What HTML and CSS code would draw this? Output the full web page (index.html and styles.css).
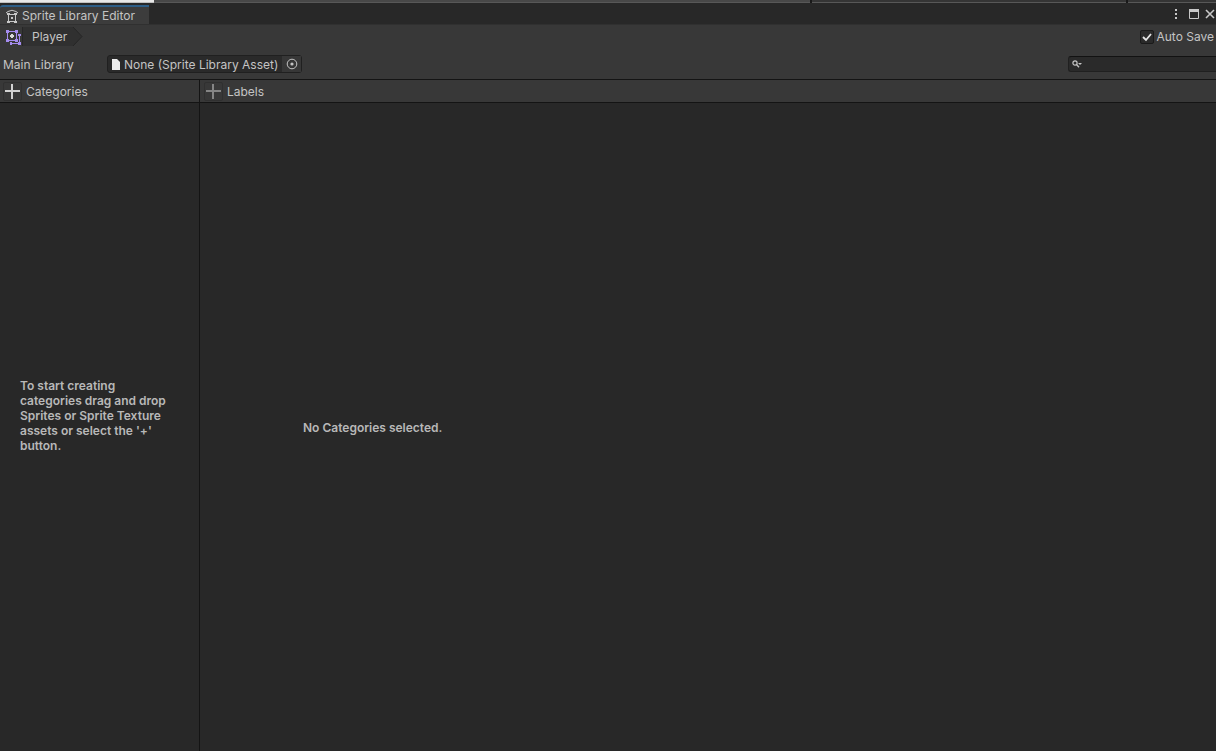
FILE: index.html
```html
<!DOCTYPE html>
<html lang="en">
<head>
    <meta charset="UTF-8">
    <meta name="viewport" content="width=device-width, initial-scale=1.0">
    <title>Sprite Library Editor</title>
    <link rel="stylesheet" href="styles.css">
</head>
<body>
    <div class="backdrop">
        <div class="backdrop-light"></div>
        <div class="backdrop-main"></div>
        <div class="backdrop-side"></div>
        <div class="backdrop-end"></div>
    </div>

    <header class="tab-bar">
        <div class="tab">
            <svg class="tab-icon" width="14" height="14" viewBox="0 0 14 14" fill="none" stroke="#c8c8c8">
                <path d="M1 4L3 2.5Q7 0 11 2.5L13 4"/>
                <path d="M3.5 5.5h7v7h-7z"/>
                <path d="M2 4h3v2H2zM9 4h3v2H9zM2 12h3v2H2zM9 12h3v2H9zM6 8h2v2H6z" fill="#c8c8c8" stroke="none"/>
            </svg>
            <h1 class="tab-title">Sprite Library Editor</h1>
        </div>
        <div class="window-buttons">
            <button class="window-btn" aria-label="Menu">
                <svg width="4" height="12" viewBox="0 0 4 12" fill="#c8c8c8"><path d="M1 1h2v2H1zM1 5h2v2H1zM1 9h2v2H1z"/></svg>
            </button>
            <button class="window-btn" aria-label="Maximize">
                <svg width="10" height="10" viewBox="0 0 10 10" fill="none" stroke="#c8c8c8"><path d="M.5 1v8.5h9V1"/><path d="M0 1.5h10" stroke-width="3"/></svg>
            </button>
            <button class="window-btn" aria-label="Close">
                <svg width="10" height="10" viewBox="0 0 10 10" fill="none" stroke="#c8c8c8" stroke-width="1.6"><path d="M1 1l8 8M9 1L1 9"/></svg>
            </button>
        </div>
    </header>

    <div class="toolbar">
        <nav class="breadcrumbs">
            <svg width="16" height="16" viewBox="0 0 16 16" fill="none" stroke="#a58cf0">
                <path d="M2.5 2.5h9v9h-9z"/>
                <path d="M14.5 6v8.5H6"/>
                <path d="M1 1h3v3H1zM10 1h3v3h-3zM1 10h3v3H1zM10 10h3v3h-3zM13 5h3v2h-3zM13 13h3v3h-3zM5 13h2v3H5z" fill="#a58cf0" stroke="none"/>
                <path d="M6 5h2v1h1v2H8v1H6V8H5V6h1z" fill="#d8d8d8" stroke="none"/>
            </svg>
            <a class="crumb" href="#">
                <span class="crumb-text">Player</span>
                <svg class="crumb-arrow" width="14" height="19" viewBox="0 0 14 19"><path d="M0 0h4l9 9.5L4 19H0z" fill="#303030"/><path d="M4 0l9 9.5L4 19" fill="none" stroke="#262626"/></svg>
            </a>
        </nav>
        <label class="auto-save">
            <input type="checkbox" class="auto-save-box" checked>
            <svg class="check" width="14" height="14" viewBox="0 0 14 14" fill="none" stroke="#e4e4e4" stroke-width="1.8"><path d="M3 7l3 3 5-6"/></svg>
            <span>Auto Save</span>
        </label>
    </div>

    <div class="library-row">
        <label class="library-label" for="mainLibrary">Main Library</label>
        <div class="object-field">
            <button class="object-value" id="mainLibrary">
                <svg width="9" height="11" viewBox="0 0 9 11" fill="#eeeeee"><path d="M0 0h5l3 3v8H0z"/></svg>
                <span>None (Sprite Library Asset)</span>
            </button>
            <button class="object-picker" aria-label="Select asset">
                <svg width="12" height="12" viewBox="0 0 12 12" fill="none" stroke="#c4c4c4"><circle cx="6" cy="6" r="4.8"/><circle cx="6" cy="6" r="1.6" fill="#c4c4c4" stroke="none"/></svg>
            </button>
        </div>
        <div class="search">
            <svg width="10" height="8" viewBox="0 0 10 8" fill="none" stroke="#c4c4c4"><circle cx="3" cy="3" r="2.1" stroke-width="1.2"/><path d="M4.5 4.5L7 7.2" stroke-width="1.3"/><path d="M6 3h4L8 5z" fill="#c4c4c4" stroke="none"/></svg>
            <input type="text" class="search-input" aria-label="Search">
        </div>
    </div>

    <main class="panes">
        <section class="pane">
            <div class="pane-header">
                <button class="add-btn" aria-label="Add category">
                    <svg width="15" height="15" viewBox="0 0 15 15" stroke="#d2d2d2" stroke-width="2"><path d="M7 0v15M0 7h15"/></svg>
                </button>
                <h2 class="pane-title">Categories</h2>
            </div>
            <div class="pane-body categories-body">
                <p class="hint">To start creating categories drag and drop Sprites or Sprite Texture assets or select the '+' button.</p>
            </div>
        </section>
        <section class="pane labels-pane">
            <div class="pane-header">
                <button class="add-btn" aria-label="Add label" disabled>
                    <svg width="15" height="15" viewBox="0 0 15 15" stroke="#858585" stroke-width="2"><path d="M7 0v15M0 7h15"/></svg>
                </button>
                <h2 class="pane-title">Labels</h2>
            </div>
            <div class="pane-body labels-body">
                <p class="hint">No Categories selected.</p>
            </div>
        </section>
    </main>
</body>
</html>
```

FILE: styles.css
```css
* {
    box-sizing: border-box;
    margin: 0;
    padding: 0;
}

body {
    display: flex;
    flex-direction: column;
    min-height: 100vh;
    background-color: #383838;
    color: #c4c4c4;
    font-family: Inter, sans-serif;
    font-size: 12px;
    line-height: 15px;
}

button,
input {
    border: none;
    background: none;
    color: inherit;
    font: inherit;
}

svg {
    display: block;
    flex: none;
}

/* edge of the main editor window behind this one */
.backdrop {
    display: grid;
    grid-template-columns: 154px 656px 316px 1fr;
    height: 3px;
    background-color: #191919;
}

.backdrop-light {
    background-color: #e8e8e8;
    border-bottom: 1px solid #c0c0c0;
}

.backdrop-main,
.backdrop-side,
.backdrop-end {
    background-color: #484848;
    border-bottom: 1px solid #585858;
}

.backdrop-side,
.backdrop-end {
    margin-left: 2px;
    background-color: #353535;
}

.tab-bar {
    display: flex;
    justify-content: space-between;
    height: 21px;
    padding-top: 2px;
    background-color: #282828;
}

.tab {
    display: flex;
    align-items: center;
    gap: 3px;
    width: 149px;
    padding-left: 5px;
    border-top: 2px solid #2c5d87;
    border-radius: 3px 0 0 0;
    background-color: #3c3c3c;
}

.tab-title,
.pane-title {
    font-size: 12px;
    font-weight: 400;
}

.window-buttons {
    display: flex;
    align-items: center;
    gap: 11px;
    padding: 0 1px 2px 0;
}

.window-buttons .window-btn:last-child {
    margin-left: -5px;
}

.toolbar {
    display: flex;
    justify-content: space-between;
    align-items: center;
    height: 24px;
    padding: 0 2px 0 5px;
    border-top: 1px solid #303030;
}

.breadcrumbs {
    display: flex;
    align-items: center;
    gap: 1px;
}

.crumb {
    display: flex;
    color: inherit;
    text-decoration: none;
}

.crumb-text {
    padding: 2px 2px 2px 9px;
    border-left: 1px solid #262626;
    background-color: #303030;
}

.auto-save {
    display: flex;
    align-items: center;
    gap: 2px;
}

.auto-save-box {
    appearance: none;
    width: 14px;
    height: 14px;
    border: 1px solid #1a1a1a;
    border-radius: 2px;
    background-color: #2a2a2a;
}

/* tick drawn over the box */
.check {
    margin-left: -16px;
    pointer-events: none;
    visibility: hidden;
}

.auto-save-box:checked + .check {
    visibility: visible;
}

.library-row {
    display: flex;
    align-items: center;
    height: 31px;
    padding: 1px 0 0 3px;
}

.library-label {
    width: 104px;
}

.object-field {
    display: flex;
    height: 18px;
    border: 1px solid #202020;
    border-radius: 3px;
    background-color: #2a2a2a;
}

.object-value {
    display: flex;
    align-items: center;
    gap: 3px;
    padding: 0 4px;
}

.object-picker {
    display: flex;
    align-items: center;
    justify-content: center;
    width: 19px;
    background-color: #373737;
}

.search {
    display: flex;
    align-items: center;
    width: 148px;
    height: 16px;
    margin-left: auto;
    padding-left: 3px;
    border: 1px solid #202020;
    border-top-color: #121212;
    border-right: none;
    border-radius: 3px 0 0 3px;
    background-color: #2a2a2a;
}

.search-input {
    flex: 1;
    min-width: 0;
    height: 14px;
    padding-left: 4px;
    outline: none;
}

.panes {
    display: grid;
    grid-template-columns: 199px 1fr;
    flex: 1;
    border-top: 1px solid #141414;
}

.pane {
    display: flex;
    flex-direction: column;
}

.labels-pane {
    border-left: 1px solid #141414;
}

.pane-header {
    display: flex;
    align-items: center;
    gap: 4px;
    height: 23px;
    padding-left: 3px;
    border-bottom: 1px solid #141414;
    background-color: #383838;
}

.labels-pane .pane-header {
    padding-left: 4px;
}

.add-btn {
    display: flex;
    align-items: center;
    justify-content: center;
    width: 19px;
    height: 19px;
    border: 1px solid #303030;
    border-radius: 2px;
}

.pane-body {
    display: flex;
    align-items: center;
    flex: 1;
    background-color: #282828;
}

.categories-body {
    padding: 0 20px 24px;
}

.labels-body {
    padding-left: 103px;
}

.hint {
    font-weight: 600;
    color: #b8b8b8;
}
```
